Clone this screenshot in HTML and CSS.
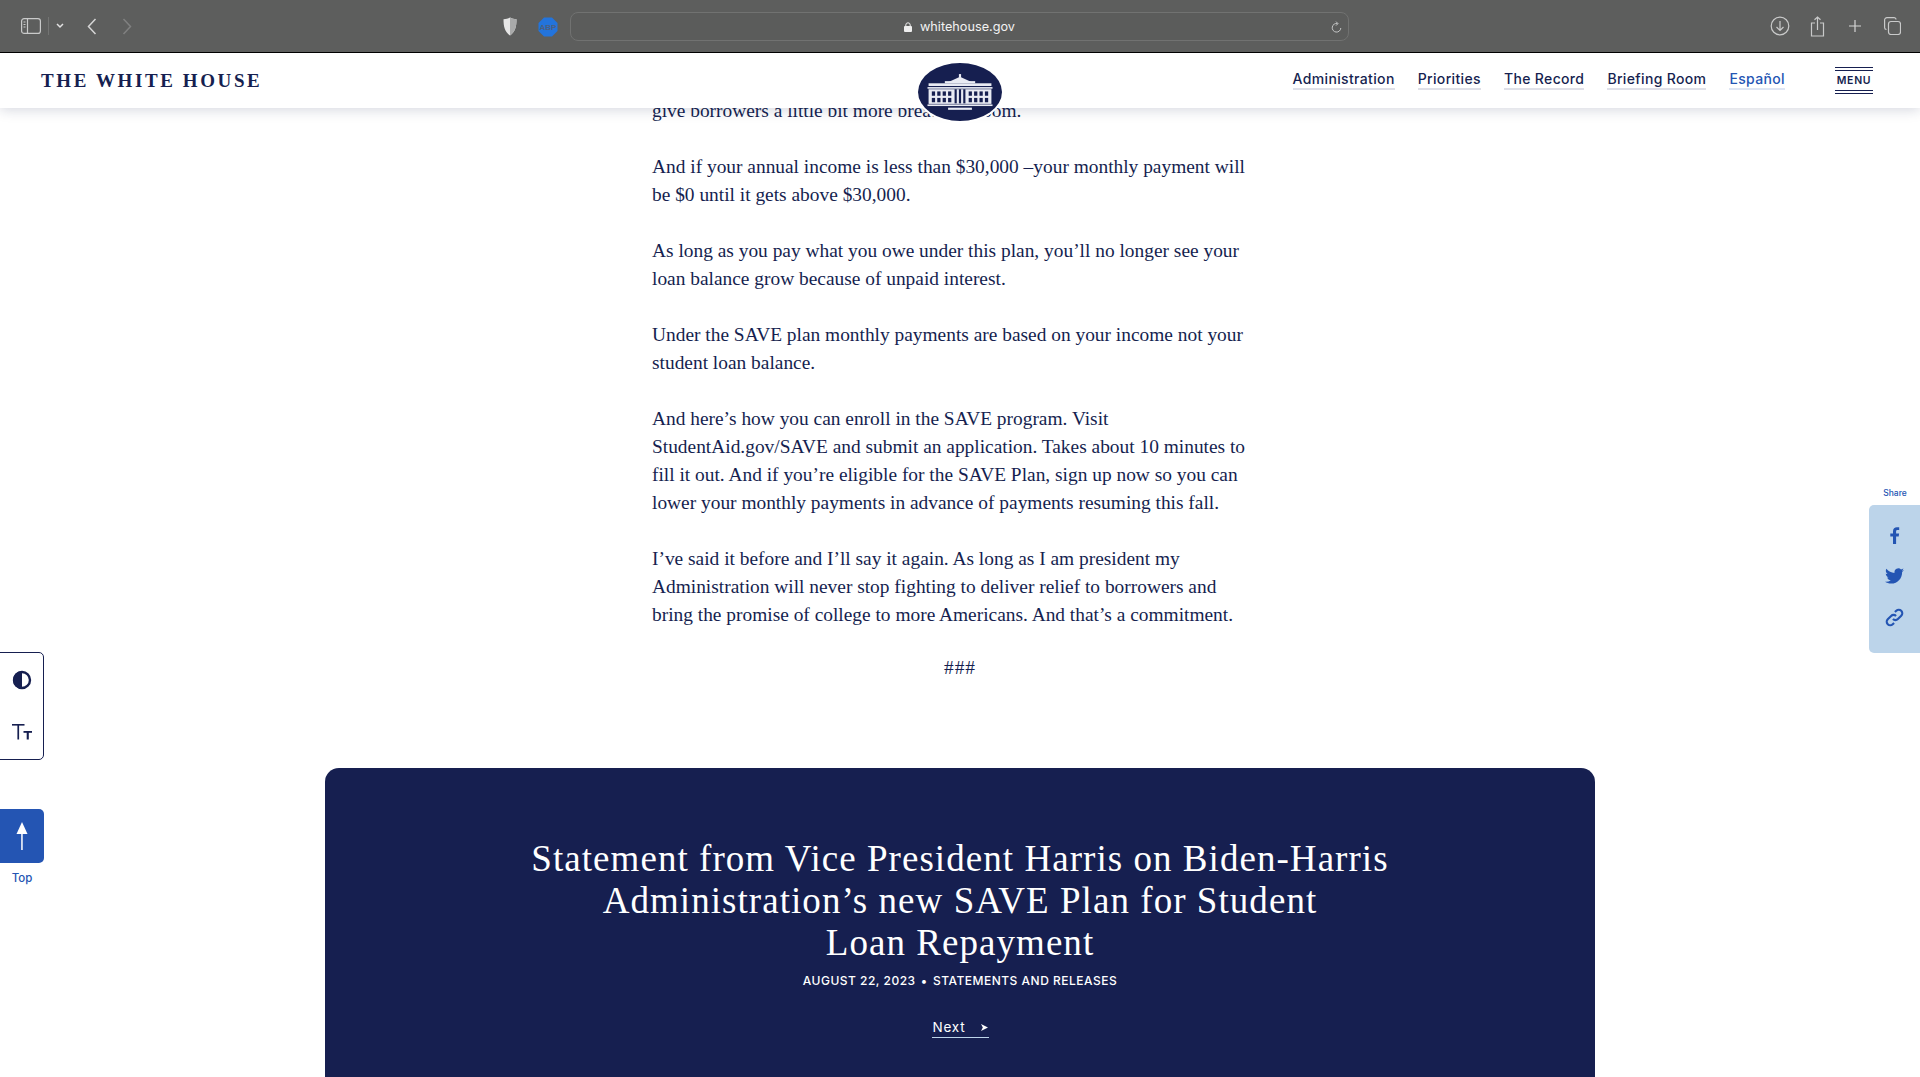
FILE: index.html
```html
<!DOCTYPE html>
<html lang="en">
<head>
  <meta charset="UTF-8" />
  <title>Statement from Vice President Harris</title>
  <link rel="stylesheet" href="styles.css">
</head>
<body>

  <!-- Browser toolbar -->
  <div class="toolbar">
    <div class="tool-group">
      <svg class="tool-icon sidebar-icon" width="20" height="16" viewBox="0 0 20 16" fill="none" stroke="#c9caca" stroke-width="1.2">
        <rect x="0.6" y="0.6" width="18.8" height="14.8" rx="2.5"/>
        <line x1="6.5" y1="1" x2="6.5" y2="15"/>
        <path d="M2.5 4h2M2.5 6.5h2M2.5 9h2" stroke-width="1.1"/>
      </svg>
      <span class="tool-sep"></span>
      <svg class="tool-icon chevron-icon" width="8" height="6" viewBox="0 0 8 6" fill="none" stroke="#e2e2e2" stroke-width="1.5"><path d="M1 1l3 3 3-3"/></svg>
      <svg class="tool-icon back-icon" width="10" height="17" viewBox="0 0 10 17" fill="none" stroke="#d5d5d5" stroke-width="1.5"><path d="M8.5 1L1.5 8.5l7 7.5"/></svg>
      <svg class="tool-icon forward-icon" width="10" height="17" viewBox="0 0 10 17" fill="none" stroke="#808181" stroke-width="1.5"><path d="M1.5 1l7 7.5-7 7.5"/></svg>
    </div>
    <div class="tool-center">
      <svg width="14" height="19" viewBox="0 0 14 19">
        <path d="M7 .5c2 1.200 4 1.600 6.500 1.800 0 7-1 12.500-6.500 16.200C1.500 14.800.5 9.300.5 2.300 3 2.100 5 1.700 7 .5z" fill="#e6e6e6"/>
        <path d="M7 .5c2 1.200 4 1.600 6.500 1.800 0 7-1 12.500-6.500 16.200z" fill="#a9aaaa"/>
      </svg>
      <svg class="abp" width="20" height="20" viewBox="0 0 20 20">
        <polygon points="6,.5 14,.5 19.500,6 19.500,14 14,19.500 6,19.500 .5,14 .5,6" fill="#2374dc"/>
        <text x="10" y="13" text-anchor="middle" class="abp-text">ABP</text>
      </svg>
      <div class="address">
        <svg width="8" height="10" viewBox="0 0 8 10" fill="#eee"><rect y="4" width="8" height="6" rx="1"/><path d="M1.800 4.500V3a2.200 2.200 0 0 1 4.400 0v1.500" fill="none" stroke="#eee" stroke-width="1"/></svg>
        <span>whitehouse.gov</span>
        <svg class="reload" width="11" height="13" viewBox="0 0 11 13" fill="none" stroke="#c5c6c6" stroke-width="1"><path d="M6.500 2.600A4.300 4.300 0 1 0 9.800 7"/><path d="M5 .6l2 2-2 2"/></svg>
      </div>
    </div>
    <div class="tool-group tool-right">
      <svg width="20" height="20" viewBox="0 0 20 20" fill="none" stroke="#c9caca" stroke-width="1.2"><circle cx="10" cy="10" r="8.800"/><path d="M10 5v9.500M6.500 11l3.500 3.500 3.500-3.500"/></svg>
      <svg class="tool-share" width="16" height="21" viewBox="0 0 16 21" fill="none" stroke="#c9caca" stroke-width="1.2"><path d="M5 7H1.500v13h12V7H10"/><path d="M7.500 14V1M4.500 3.800L7.500 1l3 2.800"/></svg>
      <svg class="tool-plus" width="14" height="14" viewBox="0 0 14 14" fill="none" stroke="#d5d5d5" stroke-width="1.200"><path d="M7 1v12M1 7h12"/></svg>
      <svg class="tool-tabs" width="17" height="18" viewBox="0 0 17 18" fill="none" stroke="#c9caca" stroke-width="1.200"><rect x="4.500" y="4.500" width="12" height="13" rx="2.500"/><path d="M2.500 12.500A2 2 0 0 1 .6 10.500V3A2.400 2.400 0 0 1 3 .6h7a2 2 0 0 1 2 2"/></svg>
    </div>
  </div>

  <div class="viewport">

    <!-- Site header -->
    <header class="site-header">
      <div class="wordmark">THE WHITE HOUSE</div>
      <nav class="site-nav">
        <a href="#">Administration</a>
        <a href="#">Priorities</a>
        <a href="#">The Record</a>
        <a href="#">Briefing Room</a>
        <a href="#" class="nav-es">Español</a>
      </nav>
      <div class="menu-btn">MENU</div>
    </header>

    <!-- White House seal -->
    <div class="seal">
      <svg width="68" height="39" viewBox="0 0 62 36" fill="#e9ebf3">
        <rect x="30" y="1" width="2" height="3"/>
        <polygon points="19,9 31,3.500 43,9"/>
        <rect x="2" y="9.500" width="58" height="2.500"/>
        <rect x="17" y="7.500" width="28" height="2"/>
        <rect x="1" y="13" width="60" height="1.500"/>
        <rect x="2" y="15" width="58" height="13.500"/>
        <g fill="#161f50">
          <rect x="5" y="17" width="3" height="4"/><rect x="10" y="17" width="3" height="4"/><rect x="15" y="17" width="3" height="4"/><rect x="20" y="17" width="3" height="4"/>
          <rect x="5" y="23" width="3" height="4"/><rect x="10" y="23" width="3" height="4"/><rect x="15" y="23" width="3" height="4"/><rect x="20" y="23" width="3" height="4"/>
          <rect x="39" y="17" width="3" height="4"/><rect x="44" y="17" width="3" height="4"/><rect x="49" y="17" width="3" height="4"/><rect x="54" y="17" width="3" height="4"/>
          <rect x="39" y="23" width="3" height="4"/><rect x="44" y="23" width="3" height="4"/><rect x="49" y="23" width="3" height="4"/><rect x="54" y="23" width="3" height="4"/>
          <rect x="26" y="15" width="2" height="13"/><rect x="30" y="15" width="2" height="13"/><rect x="34" y="15" width="2" height="13"/>
        </g>
        <rect x="1" y="29" width="60" height="1.500"/>
        <rect x="20" y="32" width="22" height="2"/>
      </svg>
    </div>

    <!-- Accessibility widget -->
    <div class="a11y-box">
      <div class="a11y-item">
        <svg width="20" height="20" viewBox="0 0 20 20"><circle cx="10" cy="10" r="8" fill="#fff" stroke="#161f50" stroke-width="2.400"/><path d="M10 1a9 9 0 0 0 0 18z" fill="#161f50"/></svg>
      </div>
      <div class="a11y-item">
        <svg width="20" height="17" viewBox="0 0 20 17" fill="#161f50"><rect x="0" y="0" width="12.500" height="1.600"/><rect x="5.400" y="0" width="1.700" height="15.500"/><rect x="11.500" y="7" width="8.500" height="1.800"/><rect x="14.700" y="7" width="2.100" height="8.500"/></svg>
      </div>
    </div>

    <div class="top-link">
      <div class="top-btn">
        <svg width="12" height="28" viewBox="0 0 12 28" fill="#fff"><polygon points="6,0 11.500,12 .5,12"/><rect x="5.200" y="10" width="1.500" height="18"/></svg>
      </div>
      <span>Top</span>
    </div>

    <!-- Share widget -->
    <div class="share">
      <span class="share-label">Share</span>
      <div class="share-box">
        <svg width="10" height="17" viewBox="0 0 10 17" fill="#2455b3"><path d="M3 17V9.500H.3V6.500H3V4.300C3 1.600 4.600.2 7 .2c1 0 1.900.1 2.200.1v2.700H7.600c-1.300 0-1.500.6-1.500 1.500v2h3l-.4 3H6.100V17z"/></svg>
        <svg width="19" height="16" viewBox="0 0 18 15" fill="#2455b3"><path d="M18 1.800c-.7.300-1.400.5-2.100.6.800-.5 1.300-1.200 1.600-2-.7.400-1.500.7-2.300.9A3.700 3.700 0 0 0 9 4.600C6 4.500 3.300 3 1.300.7.300 2.400.8 4.500 2.400 5.600c-.6 0-1.200-.2-1.700-.5 0 1.800 1.300 3.300 3 3.700-.5.100-1.100.2-1.700.1.500 1.500 1.900 2.500 3.500 2.600A7.500 7.500 0 0 1 0 13c1.700 1.100 3.600 1.700 5.700 1.700 6.900 0 10.700-5.800 10.500-11 .7-.5 1.300-1.200 1.800-1.900z"/></svg>
        <svg width="19" height="19" viewBox="0 0 18 18" fill="none" stroke="#2455b3" stroke-width="2"><path d="M7.500 10.500a3.300 3.300 0 0 0 4.700 0l3.200-3.200a3.300 3.300 0 0 0-4.700-4.700L9.400 3.900"/><path d="M10.500 7.500a3.300 3.300 0 0 0-4.700 0l-3.200 3.200a3.300 3.300 0 0 0 4.700 4.700l1.300-1.300"/></svg>
      </div>
    </div>

    <!-- Article body -->
    <main class="article">
      <p>give borrowers a little bit more breathing room.</p>
      <p>And if your annual income is less than $30,000 –your monthly payment will be $0 until it gets above $30,000.</p>
      <p>As long as you pay what you owe under this plan, you’ll no longer see your loan balance grow because of unpaid interest.</p>
      <p>Under the SAVE plan monthly payments are based on your income not your student loan balance.</p>
      <p>And here’s how you can enroll in the SAVE program. Visit StudentAid.gov/SAVE and submit an application. Takes about 10 minutes to fill it out. And if you’re eligible for the SAVE Plan, sign up now so you can lower your monthly payments in advance of payments resuming this fall.</p>
      <p>I’ve said it before and I’ll say it again. As long as I am president my Administration will never stop fighting to deliver relief to borrowers and bring the promise of college to more Americans. And that’s a commitment.</p>
      <p class="end-mark">###</p>
    </main>

    <!-- Next article card -->
    <section class="next-card">
      <h2>Statement from Vice President Harris on Biden-Harris Administration’s new SAVE Plan for Student<br>Loan Repayment</h2>
      <div class="next-meta">
        <span>AUGUST 22, 2023</span>
        <i>•</i>
        <span>STATEMENTS AND RELEASES</span>
      </div>
      <a href="#" class="next-link">Next
        <svg width="7" height="7" viewBox="0 0 7 7" fill="#fff"><polygon points="0,0 7,3.500 0,7 1.800,3.500"/></svg>
      </a>
    </section>
  </div>

</body>
</html>
```

FILE: styles.css
```css
/* Basic resets */
* { margin: 0; padding: 0; box-sizing: border-box; }
html, body { height: 100%; overflow: hidden; }
body { background: #fff; color: #161f50; font-family: "Liberation Serif", serif; display: flex; flex-direction: column; }
a { color: inherit; text-decoration: none; }

/* === Browser toolbar === */
.toolbar {
  height: 53px;
  flex: none;
  background: #5d5e5d;
  border-bottom: 1.5px solid #000;
  display: flex;
  align-items: center;
  position: relative;
  font-family: Inter, sans-serif;
}
.tool-group { display: flex; align-items: center; padding-left: 21px; }
.tool-sep { width: 1px; height: 18px; background: #737473; margin: 0 7px 0 7px; }
.chevron-icon { margin-right: 23px; }
.forward-icon { margin-left: 25px; }
.tool-center { position: absolute; left: 503px; top: 12px; display: flex; align-items: center; }
.abp { margin-left: 21px; }
.abp-text { font-family: "Liberation Sans", sans-serif; font-size: 8px; font-weight: bold; fill: #4c5f80; }
.address {
  width: 779px;
  height: 29px;
  margin-left: 12px;
  border: 1px solid #717271;
  border-radius: 8px;
  background: #5b5c5b;
  color: #f2f2f2;
  font-size: 12.700px;
  display: flex;
  align-items: center;
  justify-content: center;
  gap: 8px;
  position: relative;
}
.reload { position: absolute; right: 6px; top: 8px; }
.tool-right { margin-left: auto; padding: 0 19px 0 0; }
.tool-share { margin-left: 20px; }
.tool-plus { margin-left: 22px; }
.tool-tabs { margin-left: 22px; }

/* === Page viewport === */
.viewport { position: relative; flex: 1; overflow: hidden; }

.site-header {
  position: absolute;
  top: 0; left: 0; right: 0;
  height: 55px;
  background: #fff;
  box-shadow: 0 2px 12px rgba(22,31,80,0.18);
  display: flex;
  align-items: center;
  padding: 0 47px 0 41px;
  z-index: 10;
}
.wordmark {
  font-family: "Liberation Serif", serif;
  font-weight: bold;
  font-size: 19px;
  letter-spacing: 2.6px;
  color: #161f50;
}
.site-nav { margin-left: auto; display: flex; gap: 23px; margin-top: -2px; font-family: Inter, sans-serif; font-size: 14px; font-weight: 500; letter-spacing: .35px; }
.site-nav a { border-bottom: 2px solid #dfe0e8; line-height: 19px; }
.site-nav .nav-es { color: #2455b3; border-bottom-color: #dfe6f4; }
.menu-btn {
  margin-left: 50px;
  width: 38px;
  border-top: 4px double #161f50;
  border-bottom: 4px double #161f50;
  font-family: Inter, sans-serif;
  font-size: 10.500px;
  font-weight: 600;
  letter-spacing: .7px;
  text-align: center;
  line-height: 19px;
}

.seal {
  position: absolute;
  left: 918px;
  top: 10px;
  width: 84px;
  height: 58px;
  background: #161f50;
  border-radius: 50%;
  box-shadow: 0 0 0 2px #fff;
  z-index: 11;
  display: flex;
  align-items: center;
  justify-content: center;
}

/* Floating widgets */
.a11y-box {
  position: absolute;
  left: -1px; top: 599px;
  width: 45px; height: 108px;
  background: #fff;
  border: 1px solid #161f50;
  border-radius: 0 5px 5px 0;
  display: flex;
  flex-direction: column;
  z-index: 5;
}
.a11y-item { flex: 1; display: flex; align-items: center; justify-content: center; padding-left: 1px; }

.top-link {
  position: absolute;
  left: 0; top: 756px;
  width: 44px;
  color: #2455b3;
  font-family: Inter, sans-serif;
  font-size: 11.500px;
  font-weight: 500;
  text-align: center;
  z-index: 5;
}
.top-btn {
  height: 54px;
  margin-bottom: 8px;
  background: #2455b3;
  border-radius: 0 5px 5px 0;
  display: flex;
  align-items: center;
  justify-content: center;
}
.share {
  position: absolute;
  right: 0; top: 434px;
  width: 51px;
  color: #2455b3;
  font-family: Inter, sans-serif;
  font-size: 8.500px;
  font-weight: 500;
  text-align: center;
  z-index: 5;
}
.share-label { display: block; line-height: 12px; margin-bottom: 6px; padding-left: 1px; }
.share-box {
  height: 148px;
  padding-bottom: 4px;
  background: #bcd4ea;
  border-radius: 5px 0 0 5px;
  display: flex;
  flex-direction: column;
  align-items: center;
  justify-content: center;
  gap: 24px;
}

/* === Article === */
.article {
  width: 604px;
  margin: 44px 0 0 652px;
  font-size: 19.400px;
  line-height: 28px;
}
.article p { margin-bottom: 28px; }
.article .end-mark { text-align: center; margin: -3px 0 0; width: 616px; letter-spacing: 1px; }

/* === Next card === */
.next-card {
  width: 1270px;
  height: 400px;
  margin: 86px 0 0 325px;
  background: #161f50;
  border-radius: 14px 14px 0 0;
  color: #fff;
  text-align: center;
  padding-top: 70px;
}
.next-card h2 {
  width: 900px;
  margin: 0 auto;
  font-size: 37px;
  font-weight: 400;
  line-height: 42px;
  letter-spacing: 1.050px;
}
.next-meta {
  margin-top: 9px;
  font-family: Inter, sans-serif;
  font-size: 12px;
  font-weight: 500;
  letter-spacing: .5px;
  line-height: 16px;
}
.next-meta i { font-style: normal; margin: 0 1.500px; }
.next-link {
  display: inline-flex;
  align-items: center;
  justify-content: space-between;
  width: 57px;
  margin-top: 29px;
  font-family: Inter, sans-serif;
  font-size: 13.500px;
  letter-spacing: .8px;
  border-bottom: 1px solid #bcd4ea;
  padding: 0 1px 1px;
  line-height: 18px;
}
```
